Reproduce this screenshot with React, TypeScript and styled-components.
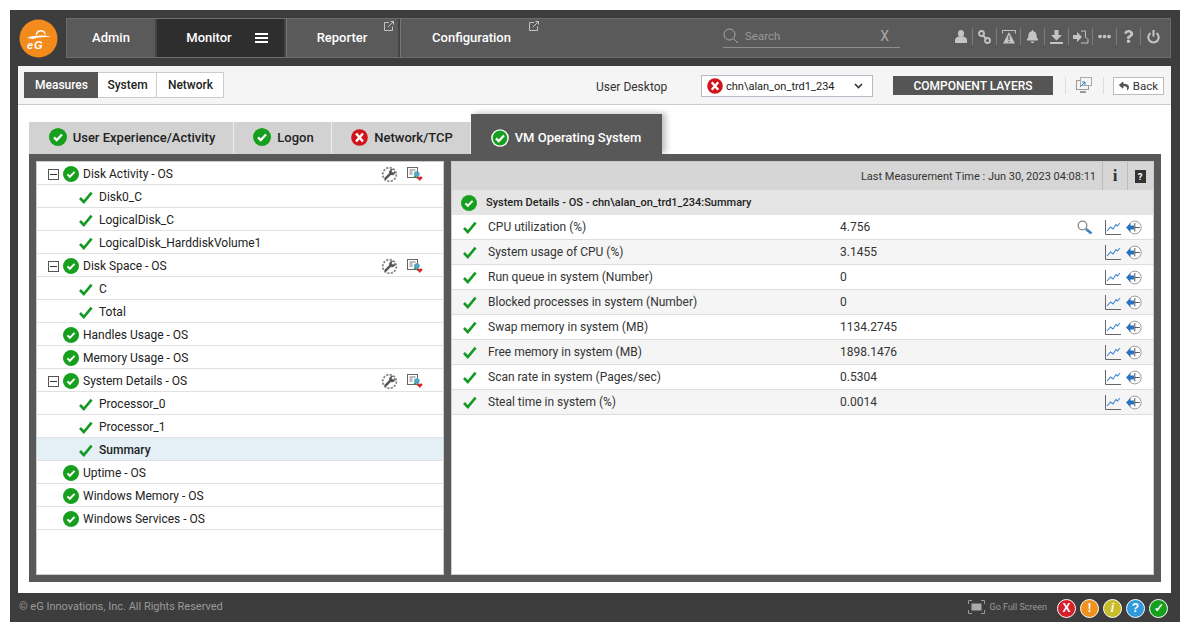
import React from "react";
import styled, { createGlobalStyle } from "styled-components";
import { FaBell, FaEllipsisH, FaQuestion, FaReply } from "react-icons/fa";

const Global = createGlobalStyle`
  html, body { margin: 0; padding: 0; background: #fff; }
  * { box-sizing: border-box; }
  body { font-family: Roboto, "Liberation Sans", sans-serif; color: #222; }
`;

const Frame = styled.div`
  width: 1170px;
  height: 612px;
  margin: 10px;
  padding: 8px 9px 0 8px;
  background: #3d3d3d;
  display: flex;
  flex-direction: column;
`;

const Header = styled.header`
  height: 48px;
  flex: none;
  display: flex;
  gap: 8px;
`;

const LogoWrap = styled.div`
  position: relative;
  width: 39px;
  height: 39px;
  flex: none;
  margin: 1px 0 0 1px;
`;

const LogoText = styled.span`
  position: absolute;
  left: 8px;
  top: 20px;
  font: italic 700 11px "Liberation Sans", sans-serif;
  color: #fff;
  letter-spacing: 1px;
`;

const NavBox = styled.nav`
  position: relative;
  flex: 1;
  height: 40px;
  background: #5a5a5a;
  border: 1px solid #6d6d6d;
  display: flex;
  align-items: stretch;
`;

const NavItem = styled.div<{ $w: number; $active?: boolean; $sep?: boolean }>`
  position: relative;
  width: ${(p) => p.$w}px;
  flex: none;
  display: flex;
  align-items: center;
  justify-content: center;
  gap: 23px;
  padding: 0 0 2px ${(p) => (p.$active ? 13 : 0)}px;
  font-size: 13px;
  font-weight: 500;
  color: #fff;
  background: ${(p) => (p.$active ? "#2e2e2e" : "transparent")};
  border-right: ${(p) => (p.$sep ? "2px solid #444" : "none")};
  box-shadow: ${(p) => (p.$sep ? "1px 0 0 #777" : "none")};
`;

const Burger = styled.span`
  display: block;
  width: 13px;
  height: 10px;
  margin-top: 2px;
  border-top: 2px solid #fff;
  border-bottom: 2px solid #fff;
  position: relative;
  &::after {
    content: "";
    position: absolute;
    left: 0;
    right: 0;
    top: 2px;
    height: 2px;
    background: #fff;
  }
`;

const ExtIcon = styled.svg`
  position: absolute;
  top: 2px;
  right: 4px;
`;

const SearchBox = styled.div`
  position: absolute;
  left: 656px;
  top: 5px;
  width: 177px;
  height: 24px;
  padding-top: 1px;
  display: flex;
  align-items: center;
  border-bottom: 1px solid #8f8f8f;
  color: #999;
  font-size: 11.5px;
`;

const SearchLabel = styled.span`
  margin-left: 6px;
  flex: 1;
`;

const SearchClear = styled.span`
  font-size: 14px;
  margin-right: 11px;
  color: #aaa;
`;

const NavRight = styled.div`
  margin-left: auto;
  display: flex;
  align-items: center;
  padding: 0 5px 3px 0;
  color: #c4c4c4;
`;

const ToolIcon = styled.span<{ $last?: boolean }>`
  width: 24px;
  height: 17px;
  display: flex;
  align-items: center;
  justify-content: center;
  border-right: ${(p) => (p.$last ? "none" : "1px solid #7c7c7c")};
`;

const Content = styled.main`
  width: 1153px;
  height: 527px;
  flex: none;
  background: #fff;
  display: flex;
  flex-direction: column;
`;

const SubBar = styled.div`
  height: 39px;
  flex: none;
  background: #f5f5f5;
  border-bottom: 1px solid #ccc;
  display: flex;
  align-items: center;
  padding: 0 6px 0 6px;
`;

const SubTabs = styled.div`
  display: flex;
  height: 26px;
`;

const SubTab = styled.div<{ $w: number; $active?: boolean }>`
  width: ${(p) => p.$w}px;
  display: flex;
  align-items: center;
  justify-content: center;
  padding-left: 1px;
  font-size: 12px;
  font-weight: 500;
  color: ${(p) => (p.$active ? "#fff" : "#222")};
  background: ${(p) => (p.$active ? "#555" : "#fff")};
  border: 1px solid ${(p) => (p.$active ? "#555" : "#ccc")};
  border-left-width: ${(p) => (p.$active ? 1 : 0)}px;
`;

const DeskLabel = styled.span`
  margin: 4px 0 0 372px;
  font-size: 12px;
  color: #333;
  width: 105px;
  flex: none;
`;

const SelectBox = styled.div`
  width: 172px;
  height: 22px;
  margin-top: 2px;
  background: #fff;
  border: 1px solid #b4bac6;
  display: flex;
  align-items: center;
  padding: 0 9px 0 5px;
  gap: 3px;
  font-size: 11px;
  color: #222;
`;

const SelectText = styled.span`
  flex: 1;
`;

const LayersBtn = styled.div`
  width: 160px;
  height: 19px;
  margin: 1px 0 0 20px;
  background: #555;
  color: #fff;
  font-size: 12px;
  font-weight: 500;
  display: flex;
  align-items: center;
  justify-content: center;
`;

const SubDivider = styled.span<{ $left?: number }>`
  width: 1px;
  height: 17px;
  background: #ddd;
  margin: 1px 0 0 ${(p) => p.$left ?? 0}px;
`;

const RemoteIcon = styled.svg`
  margin: 1px 11px 0 10px;
`;

const BackBtn = styled.div`
  width: 51px;
  height: 18px;
  margin: 2px 0 0 9px;
  background: #fff;
  border: 1px solid #bbb;
  display: flex;
  align-items: center;
  justify-content: center;
  gap: 4px;
  font-size: 11.5px;
  color: #333;
`;

const Main = styled.div`
  flex: 1;
  padding: 8px 10px 11px 11px;
  display: flex;
  flex-direction: column;
  min-height: 0;
`;

const TabRow = styled.div`
  display: flex;
  align-items: flex-end;
  height: 41px;
  flex: none;
`;

const Tab = styled.div<{ $w: number; $active?: boolean }>`
  width: ${(p) => p.$w}px;
  height: ${(p) => (p.$active ? 40 : 32)}px;
  flex: none;
  display: flex;
  align-items: center;
  justify-content: center;
  gap: 6px;
  font-size: 13px;
  font-weight: 500;
  padding: ${(p) => (p.$active ? "7px 0 0" : "0 0 2px 2px")};
  color: ${(p) => (p.$active ? "#fff" : "#222")};
  background: ${(p) => (p.$active ? "#585858" : "#d2d2d2")};
  border-right: 1px solid ${(p) => (p.$active ? "#585858" : "#eee")};
  box-shadow: ${(p) => (p.$active ? "4px -1px 6px rgba(0,0,0,0.25)" : "none")};
`;

const Panel = styled.div`
  flex: 1;
  background: #585858;
  padding: 7px;
  display: flex;
  gap: 7px;
  min-height: 0;
`;

const TreePane = styled.div`
  width: 408px;
  flex: none;
  background: #fff;
  border: 1px solid #ccc;
`;

const TreeRow = styled.div<{ $selected?: boolean; $child?: boolean }>`
  height: 23px;
  display: flex;
  align-items: center;
  padding: 2px 0 0 ${(p) => (p.$child ? 42 : 26)}px;
  border-bottom: 1px solid #e1e1e1;
  font-size: 12px;
  font-weight: ${(p) => (p.$selected ? 500 : 400)};
  background: ${(p) => (p.$selected ? "#e4eff6" : "#fff")};
  gap: ${(p) => (p.$child ? 6 : 4)}px;
  color: #222;
`;

const Expander = styled.span`
  width: 11px;
  height: 11px;
  border: 1px solid #555;
  margin: 0 0 0 -15px;
  position: relative;
  flex: none;
  &::after {
    content: "";
    position: absolute;
    left: 1px;
    right: 1px;
    top: 4px;
    height: 1px;
    background: #333;
  }
`;

const RowTools = styled.span`
  margin-left: auto;
  margin-right: 20px;
  display: flex;
  gap: 9px;
  align-items: center;
`;

const DataPane = styled.div`
  flex: 1;
  background: #fff;
  border: 1px solid #ccc;
  display: flex;
  flex-direction: column;
`;

const TimeBar = styled.div`
  height: 28px;
  flex: none;
  background: #d6d6d6;
  display: flex;
  align-items: center;
  justify-content: flex-end;
  padding-right: 1px;
  font-size: 11px;
  color: #333;
`;

const TimeText = styled.span`
  margin-right: 6px;
`;

const TimeCell = styled.div`
  width: 25px;
  height: 100%;
  border-left: 1px solid #bbb;
  display: flex;
  align-items: center;
  justify-content: center;
`;

const InfoGlyph = styled.span`
  font: 700 17px "Liberation Serif", serif;
  color: #333;
`;

const HelpGlyph = styled.span`
  width: 11px;
  height: 13px;
  background: #333;
  color: #fff;
  font-size: 9.5px;
  font-weight: 700;
  display: flex;
  align-items: center;
  justify-content: center;
`;

const TitleBar = styled.div`
  height: 25px;
  flex: none;
  background: #e5e5e5;
  display: flex;
  align-items: center;
  gap: 9px;
  padding-left: 9px;
  font-size: 11px;
  font-weight: 500;
  color: #222;
`;

const DataRow = styled.div<{ $odd: boolean }>`
  height: 25px;
  flex: none;
  display: flex;
  align-items: center;
  padding-left: 11px;
  border-bottom: 1px solid #ddd;
  background: ${(p) => (p.$odd ? "#f5f5f5" : "#fff")};
  font-size: 12px;
  color: #333;
`;

const MetricName = styled.span`
  width: 352px;
  margin-left: 11px;
  flex: none;
`;

const MetricValue = styled.span`
  flex: 1;
`;

const RowIcons = styled.span`
  width: 75px;
  margin-right: 11px;
  display: flex;
  align-items: center;
  justify-content: flex-end;
  gap: 4px;
`;

const ZoomSlot = styled.span`
  margin-right: 8px;
  display: flex;
`;

const Footer = styled.footer`
  flex: 1;
  display: flex;
  align-items: center;
  padding: 1px 3px 0 1px;
  font-size: 11px;
  color: #9a9a9a;
`;

const Copyright = styled.span`
  margin-top: -3px;
`;

const FullScreen = styled.span`
  margin: -3px 6px 0 auto;
  display: flex;
  align-items: center;
  gap: 5px;
  font-size: 9px;
  color: #9a9a9a;
`;

const Alarm = styled.span<{ $color: string }>`
  width: 19px;
  height: 19px;
  border-radius: 50%;
  background: ${(p) => p.$color};
  border: 1.5px solid #fff;
  color: #fff;
  display: flex;
  align-items: center;
  justify-content: center;
  font-size: 12px;
  font-weight: 900;
  margin-left: 4px;
  font-family: "Liberation Sans", sans-serif;
`;

const OkIcon = ({ size = 18, ring = false }: { size?: number; ring?: boolean }) => (
  <svg width={size} height={size} viewBox="0 0 18 18" style={{ flex: "none" }}>
    <circle cx="9" cy="9" r="8.8" fill={ring ? "#fff" : "#16a01d"} />
    <circle cx="9" cy="9" r={ring ? 7.4 : 8.8} fill="#16a01d" />
    <path d="M5 9.400l2.700 2.700L13 6.600" fill="none" stroke="#fff" strokeWidth="2.200" />
  </svg>
);

const FailIcon = ({ size = 17 }: { size?: number }) => (
  <svg width={size} height={size} viewBox="0 0 18 18" style={{ flex: "none" }}>
    <circle cx="9" cy="9" r="8.800" fill="#d0141c" />
    <path d="M5.400 4.800l7.200 8.400M12.600 4.800l-7.200 8.400" stroke="#fff" strokeWidth="2.600" />
  </svg>
);

const Tick = () => (
  <svg width="14" height="13" viewBox="0 0 14 13" style={{ flex: "none" }}>
    <path d="M1 7l3.800 4L12.600 1.600" fill="none" stroke="#149a24" strokeWidth="2.600" />
  </svg>
);

const Gear = () => (
  <svg width="17" height="17" viewBox="0 0 18 18">
    <circle cx="9" cy="9" r="7.200" fill="none" stroke="#8a8a8a" strokeWidth="2" strokeDasharray="2.300 1.470" />
    <circle cx="9" cy="9" r="5.600" fill="#fff" />
    <path d="M4.200 13.800L10 8" stroke="#555" strokeWidth="2.600" />
    <path d="M8.600 7.400a3.600 3.600 0 0 1 4.600-4.200l-2.200 2.200 1.800 1.800 2.200-2.200a3.600 3.600 0 0 1-4.400 4.600z" fill="#555" />
  </svg>
);

const ReportIcon = () => (
  <svg width="16" height="16" viewBox="0 0 16 16">
    <rect x="0.500" y="1.500" width="10" height="10" fill="#fff" stroke="#666" />
    <path d="M2.500 4h6M2.500 6h3M2.500 8h3" stroke="#777" />
    <circle cx="9.800" cy="8" r="2.800" fill="#4ea6c9" />
    <path d="M6.500 10.500l2.500-1 1 3z" fill="#2a9a3b" />
    <path d="M10 11.500h5.500L12.700 15z" fill="#d8232a" />
    <circle cx="11.500" cy="11.700" r="1.300" fill="#d8232a" />
    <circle cx="14" cy="11.700" r="1.300" fill="#d8232a" />
  </svg>
);

const ChartIcon = () => (
  <svg width="16" height="15" viewBox="0 0 16 15">
    <path d="M.5 0v14.500H16" fill="none" stroke="#666" />
    <path d="M2 11l3.500-4 2.500 2 3-4.500 1.500 1.500L15 3" fill="none" stroke="#3f86cf" strokeWidth="1.100" />
  </svg>
);

const HistoryIcon = () => (
  <svg width="17" height="15" viewBox="0 0 17 15">
    <circle cx="9.800" cy="7.500" r="6.400" fill="#fff" stroke="#999" />
    <path d="M9.800 3v8.500M9.800 7.500h5" stroke="#444" strokeWidth="0.900" />
    <path d="M1 7.500L5.500 3v2.500h3.500v4H5.500v2.500z" fill="#2a72c0" />
  </svg>
);

const ZoomIcon = () => (
  <svg width="16" height="15" viewBox="0 0 16 15">
    <circle cx="5.500" cy="5.500" r="4.300" fill="#fff" stroke="#888" strokeWidth="1.300" />
    <path d="M9 9l5.500 4.500" stroke="#3a82c0" strokeWidth="2.600" />
  </svg>
);

const UserIcon = () => (
  <svg width="12" height="13" viewBox="0 0 12 13">
    <ellipse cx="6" cy="3.500" rx="3" ry="3.500" fill="#c4c4c4" />
    <path d="M0 13v-3c0-2 2-3 3.500-3.500h5C10 7 12 8 12 10v3z" fill="#c4c4c4" />
  </svg>
);

const LinkIcon = () => (
  <svg width="13" height="14" viewBox="0 0 13 14">
    <circle cx="3.500" cy="3.500" r="2.500" fill="none" stroke="#c4c4c4" strokeWidth="1.800" />
    <circle cx="9.500" cy="10.500" r="2.500" fill="none" stroke="#c4c4c4" strokeWidth="1.800" />
    <path d="M4.500 5l4 4" stroke="#c4c4c4" strokeWidth="1.800" />
  </svg>
);

const AlertBoxIcon = () => (
  <svg width="14" height="14" viewBox="0 0 14 14">
    <path d="M.5 3.500V.5h13v3" fill="none" stroke="#c4c4c4" />
    <path d="M7 2l6 11.500H1z" fill="#c4c4c4" />
    <path d="M7 5.500v4.500M7 11v1.200" stroke="#5a5a5a" strokeWidth="1.300" />
  </svg>
);

const DownloadIcon = () => (
  <svg width="13" height="14" viewBox="0 0 13 14">
    <path d="M4.500 0h4v5H12L6.500 10.500 1 5h3.500z" fill="#c4c4c4" />
    <path d="M0 13h13" stroke="#c4c4c4" strokeWidth="2" />
  </svg>
);

const EnterIcon = () => (
  <svg width="16" height="14" viewBox="0 0 16 14">
    <path d="M0 5h4V2l5 5-5 5V9H0z" fill="#c4c4c4" />
    <path d="M8 1h4.500v6l2.500 2.500V13H8" fill="none" stroke="#c4c4c4" />
  </svg>
);

const PowerIcon = () => (
  <svg width="13" height="14" viewBox="0 0 13 14">
    <path d="M3.500 3a5.200 5.200 0 1 0 6 0" fill="none" stroke="#c4c4c4" strokeWidth="2.100" />
    <path d="M6.500 0v6.500" stroke="#c4c4c4" strokeWidth="2.100" />
  </svg>
);

const External = () => (
  <ExtIcon width="10" height="10" viewBox="0 0 10 10">
    <path d="M5 1.500H.5v8h8V5.500" fill="none" stroke="#ddd" strokeWidth="0.800" />
    <path d="M4 6l5-5M6.500.5H9.500v3" fill="none" stroke="#ddd" strokeWidth="0.800" />
  </ExtIcon>
);

const tree: { label: string; child?: boolean; tools?: boolean; selected?: boolean }[] = [
  { label: "Disk Activity - OS", tools: true },
  { label: "Disk0_C", child: true },
  { label: "LogicalDisk_C", child: true },
  { label: "LogicalDisk_HarddiskVolume1", child: true },
  { label: "Disk Space - OS", tools: true },
  { label: "C", child: true },
  { label: "Total", child: true },
  { label: "Handles Usage - OS" },
  { label: "Memory Usage - OS" },
  { label: "System Details - OS", tools: true },
  { label: "Processor_0", child: true },
  { label: "Processor_1", child: true },
  { label: "Summary", child: true, selected: true },
  { label: "Uptime - OS" },
  { label: "Windows Memory - OS" },
  { label: "Windows Services - OS" },
];

const metrics = [
  ["CPU utilization (%)", "4.756"],
  ["System usage of CPU (%)", "3.1455"],
  ["Run queue in system (Number)", "0"],
  ["Blocked processes in system (Number)", "0"],
  ["Swap memory in system (MB)", "1134.2745"],
  ["Free memory in system (MB)", "1898.1476"],
  ["Scan rate in system (Pages/sec)", "0.5304"],
  ["Steal time in system (%)", "0.0014"],
];

export default function App() {
  return (
    <>
      <Global />
      <Frame>
        <Header>
          <LogoWrap>
            <svg width="39" height="39" viewBox="0 0 39 39">
              <circle cx="19.500" cy="19.500" r="19" fill="#f28a1c" />
              <path d="M8 19c7-3 16-3 24-1-6 0-13 0-18 2z" fill="#fff" />
              <path d="M17 17c-1-4 2-6 5-6s6 3 4 6c0-3-2-4.500-4-4.500s-4 2-5 4.500z" fill="#fff" />
            </svg>
            <LogoText>eG</LogoText>
          </LogoWrap>
          <NavBox>
            <NavItem $w={90} $sep>Admin</NavItem>
            <NavItem $w={129} $active $sep>Monitor<Burger /></NavItem>
            <NavItem $w={114} $sep>Reporter<External /></NavItem>
            <NavItem $w={143}>Configuration<External /></NavItem>
            <SearchBox>
              <svg width="16" height="16" viewBox="0 0 16 16">
                <circle cx="6.500" cy="6.500" r="5.500" fill="none" stroke="#aaa" />
                <path d="M10.500 10.500l4.500 4.500" stroke="#aaa" />
              </svg>
              <SearchLabel>Search</SearchLabel>
              <SearchClear>X</SearchClear>
            </SearchBox>
            <NavRight>
              <ToolIcon><UserIcon /></ToolIcon>
              <ToolIcon><LinkIcon /></ToolIcon>
              <ToolIcon><AlertBoxIcon /></ToolIcon>
              <ToolIcon><FaBell size={13} /></ToolIcon>
              <ToolIcon><DownloadIcon /></ToolIcon>
              <ToolIcon><EnterIcon /></ToolIcon>
              <ToolIcon><FaEllipsisH size={13} /></ToolIcon>
              <ToolIcon><FaQuestion size={13} /></ToolIcon>
              <ToolIcon $last><PowerIcon /></ToolIcon>
            </NavRight>
          </NavBox>
        </Header>
        <Content>
          <SubBar>
            <SubTabs>
              <SubTab $w={74} $active>Measures</SubTab>
              <SubTab $w={59}>System</SubTab>
              <SubTab $w={67}>Network</SubTab>
            </SubTabs>
            <DeskLabel>User Desktop</DeskLabel>
            <SelectBox>
              <FailIcon size={16} />
              <SelectText>chn\alan_on_trd1_234</SelectText>
              <svg width="9" height="6" viewBox="0 0 9 6">
                <path d="M1 1l3.500 3.500L8 1" fill="none" stroke="#333" strokeWidth="1.600" />
              </svg>
            </SelectBox>
            <LayersBtn>COMPONENT LAYERS</LayersBtn>
            <SubDivider $left={12} />
            <RemoteIcon width="16" height="17" viewBox="0 0 16 17">
              <rect x="0.500" y="3.500" width="12" height="9" fill="#f5f5f5" stroke="#999" />
              <rect x="4.500" y="0.500" width="11" height="8" fill="#f5f5f5" stroke="#aaa" />
              <path d="M4 10l5-5M6 5h3v3" fill="none" stroke="#3a82c0" />
              <path d="M4 15h6" stroke="#999" strokeWidth="2" />
            </RemoteIcon>
            <SubDivider />
            <BackBtn>
              <FaReply size={10} color="#555" />
              Back
            </BackBtn>
          </SubBar>
          <Main>
            <TabRow>
              <Tab $w={205}><OkIcon />User Experience/Activity</Tab>
              <Tab $w={98}><OkIcon />Logon</Tab>
              <Tab $w={139}><FailIcon />Network/TCP</Tab>
              <Tab $w={191} $active><OkIcon ring />VM Operating System</Tab>
            </TabRow>
            <Panel>
              <TreePane>
                {tree.map((row) => (
                  <TreeRow key={row.label} $child={row.child} $selected={row.selected}>
                    {row.tools && <Expander />}
                    {row.child ? <Tick /> : <OkIcon size={16} />}
                    {row.label}
                    {row.tools && (
                      <RowTools>
                        <Gear />
                        <ReportIcon />
                      </RowTools>
                    )}
                  </TreeRow>
                ))}
              </TreePane>
              <DataPane>
                <TimeBar>
                  <TimeText>Last Measurement Time : Jun 30, 2023 04:08:11</TimeText>
                  <TimeCell><InfoGlyph>i</InfoGlyph></TimeCell>
                  <TimeCell><HelpGlyph>?</HelpGlyph></TimeCell>
                </TimeBar>
                <TitleBar>
                  <OkIcon size={16} />
                  System Details - OS - chn\alan_on_trd1_234:Summary
                </TitleBar>
                {metrics.map(([name, value], i) => (
                  <DataRow key={name} $odd={i % 2 === 1}>
                    <Tick />
                    <MetricName>{name}</MetricName>
                    <MetricValue>{value}</MetricValue>
                    <RowIcons>
                      {i === 0 && <ZoomSlot><ZoomIcon /></ZoomSlot>}
                      <ChartIcon />
                      <HistoryIcon />
                    </RowIcons>
                  </DataRow>
                ))}
              </DataPane>
            </Panel>
          </Main>
        </Content>
        <Footer>
          <Copyright>© eG Innovations, Inc. All Rights Reserved</Copyright>
          <FullScreen>
            <svg width="17" height="14" viewBox="0 0 17 14">
              <path d="M.5 4V.5H4M13 .5h3.500V4M.5 10v3.500H4M13 13.500h3.500V10" fill="none" stroke="#999" />
              <rect x="3.500" y="3.500" width="10" height="7" fill="#aaa" />
            </svg>
            Go Full Screen
          </FullScreen>
          <Alarm $color="#d5202b">X</Alarm>
          <Alarm $color="#f0921e">!</Alarm>
          <Alarm $color="#c9bd2a"><i>i</i></Alarm>
          <Alarm $color="#2f9bdc">?</Alarm>
          <Alarm $color="#16a01d">✓</Alarm>
        </Footer>
      </Frame>
    </>
  );
}
